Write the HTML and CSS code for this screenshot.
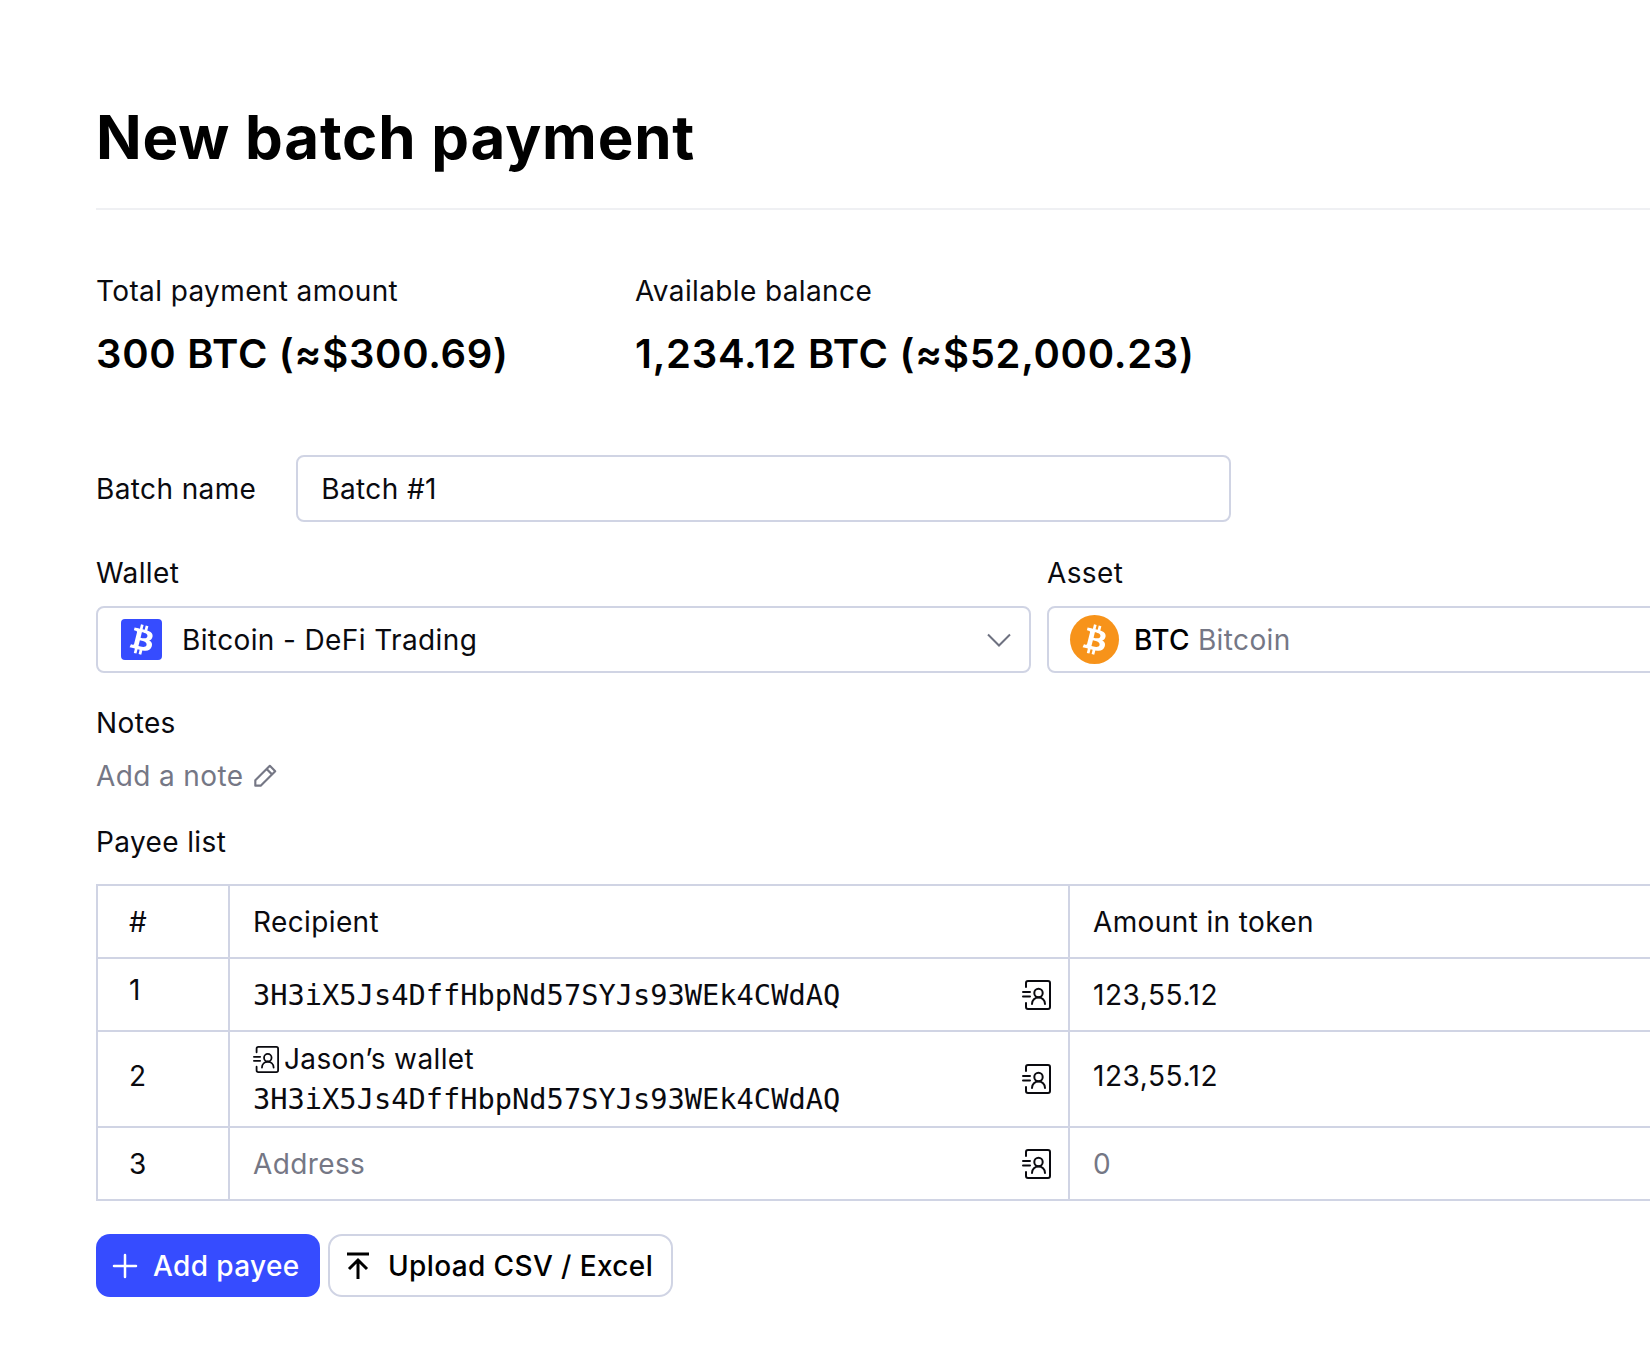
FILE: index.html
```html
<!DOCTYPE html>
<html lang="en">
	<head>
		<title>New batch payment</title>
		<meta charset="UTF-8">
		<link rel="stylesheet" href="styles.css">
	</head>
	<body>
		<svg class="iconDefs" width="0" height="0">
			<symbol id="book" viewBox="0 0 29 30">
				<path d="M4 7V3a2 2 0 0 1 2-2h20a2 2 0 0 1 2 2v24a2 2 0 0 1-2 2H6a2 2 0 0 1-2-2v-4" fill="none" stroke="currentColor" stroke-width="2" stroke-linecap="round"/>
				<path d="M1 12h7M1 16.500h7" fill="none" stroke="currentColor" stroke-width="2" stroke-linecap="round"/>
				<circle cx="16.500" cy="13" r="4.200" fill="none" stroke="currentColor" stroke-width="2"/>
				<path d="M10 24c0-4 3-6.500 6.500-6.500s6.500 2.500 6.500 6.500" fill="none" stroke="currentColor" stroke-width="2" stroke-linecap="round"/>
			</symbol>
			<symbol id="btcB" viewBox="5 3.500 14 17">
				<path fill="currentColor" fill-rule="evenodd" d="M17.288 10.291c.24-1.59-.974-2.45-2.64-3.03l.54-2.153-1.315-.33-.525 2.107c-.345-.087-.705-.167-1.064-.25l.526-2.127-1.32-.33-.54 2.165c-.285-.067-.565-.132-.84-.2l-1.815-.45-.35 1.407s.975.225.955.236c.535.136.63.486.615.766l-1.477 5.92c-.075.166-.24.406-.614.314.015.02-.96-.24-.96-.24l-.66 1.51 1.71.426.93.242-.54 2.19 1.32.327.54-2.17c.36.1.705.19 1.05.273l-.51 2.154 1.32.33.545-2.19c2.24.427 3.93.257 4.64-1.774.57-1.637-.03-2.58-1.217-3.196.854-.193 1.5-.76 1.68-1.93h.01zm-3.01 4.22c-.404 1.64-3.157.75-4.05.53l.72-2.9c.896.23 3.757.67 3.33 2.37zm.41-4.24c-.37 1.49-2.662.735-3.405.55l.654-2.64c.744.18 3.137.524 2.75 2.084v.006z"/>
			</symbol>
		</svg>

		<div class="mainBlock">
			<h1>New batch payment</h1>

			<div class="totals">
				<div class="totalBox">
					<p class="totalLabel">Total payment amount</p>
					<p class="totalValue">300 BTC (≈$300.69)</p>
				</div>
				<div class="totalBox">
					<p class="totalLabel">Available balance</p>
					<p class="totalValue">1,234.12 BTC (≈$52,000.23)</p>
				</div>
			</div>

			<div class="batchRow">
				<span class="fieldLabel">Batch name</span>
				<div class="field batchField">Batch #1</div>
			</div>

			<div class="selectRow">
				<div class="selectCol">
					<span class="fieldLabel">Wallet</span>
					<div class="field walletField">
						<span class="walletIcon"><svg width="28" height="34"><use href="#btcB"/></svg></span>
						<span class="walletName">Bitcoin - DeFi Trading</span>
						<svg class="chevron" width="26" height="16" viewBox="0 0 26 16"><path d="M2 2.500l11 11 11-11" fill="none" stroke="currentColor" stroke-width="2"/></svg>
					</div>
				</div>
				<div class="selectCol">
					<span class="fieldLabel">Asset</span>
					<div class="field assetField">
						<span class="assetIcon"><svg width="28" height="34"><use href="#btcB"/></svg></span>
						<span class="assetCode">BTC</span>
						<span class="assetName">Bitcoin</span>
					</div>
				</div>
			</div>

			<p class="fieldLabel notesLabel">Notes</p>
			<p class="addNote">Add a note
				<svg width="28" height="28" viewBox="0 0 26 26"><path d="M17.500 3.500l5 5L9 22H4v-5zM14.500 6.500l5 5" fill="none" stroke="currentColor" stroke-width="2" stroke-linejoin="round"/></svg>
			</p>

			<p class="fieldLabel payeeLabel">Payee list</p>
			<table class="payeeTable">
				<tr class="headRow">
					<th class="numCol">#</th>
					<th class="recipientCol">Recipient</th>
					<th>Amount in token</th>
				</tr>
				<tr class="payeeRow">
					<td class="numCol firstNum">1</td>
					<td class="recipientCol">
						<div class="recipientCell">
							<div class="address">3H3iX5Js4DffHbpNd57SYJs93WEk4CWdAQ</div>
							<svg class="bookIcon" width="29" height="30"><use href="#book"/></svg>
						</div>
					</td>
					<td class="amount">123,55.12</td>
				</tr>
				<tr class="payeeRow tallRow">
					<td class="numCol raised">2</td>
					<td class="recipientCol">
						<div class="recipientCell">
							<div>
								<div class="payeeName"><svg width="26" height="27"><use href="#book"/></svg>Jason’s wallet</div>
								<div class="address">3H3iX5Js4DffHbpNd57SYJs93WEk4CWdAQ</div>
							</div>
							<svg class="bookIcon" width="29" height="30"><use href="#book"/></svg>
						</div>
					</td>
					<td class="amount raised">123,55.12</td>
				</tr>
				<tr class="payeeRow">
					<td class="numCol">3</td>
					<td class="recipientCol">
						<div class="recipientCell">
							<div class="placeholder">Address</div>
							<svg class="bookIcon" width="29" height="30"><use href="#book"/></svg>
						</div>
					</td>
					<td class="placeholder">0</td>
				</tr>
			</table>

			<div class="buttons">
				<div class="button buttonAdd">
					<svg width="26" height="26" viewBox="0 0 26 26"><path d="M13 2v22M2 13h22" fill="none" stroke="currentColor" stroke-width="2.500" stroke-linecap="round"/></svg>
					Add payee
				</div>
				<div class="button buttonUpload">
					<svg width="26" height="28" viewBox="0 0 26 28"><path d="M2 2h22M13 27V8M4 17l9-9 9 9" fill="none" stroke="currentColor" stroke-width="3"/></svg>
					Upload CSV / Excel
				</div>
			</div>
		</div>
	</body>
</html>
```

FILE: styles.css
```css
html, body {
	margin : 0;
	padding : 0;
	height : 1350px;
	overflow : hidden;
	background-color : white;
}
body {
	font-family : Inter, "Liberation Sans", sans-serif;
	font-size : 28px;
	letter-spacing : 0.38px;
	color : #0a0a0f;
}
p {
	margin : 0;
	padding : 0;
}
.iconDefs {
	position : absolute;
}
.mainBlock {
	width : 1760px;
	padding : 93px 0 0 96px;
}
h1 {
	margin : 0;
	padding-bottom : 26px;
	font-size : 60px;
	line-height : 89px;
	font-weight : 700;
	letter-spacing : 0.8px;
	color : black;
	border-bottom : 2px solid #eff0f3;
}
.totals {
	display : flex;
	gap : 0;
	margin-top : 62px;
}
.totalBox {
	flex : none;
	width : 539px;
}
.totalLabel {
	line-height : 38px;
}
.totalValue {
	margin-top : 20px;
	font-size : 40px;
	line-height : 48px;
	font-weight : 600;
	letter-spacing : 0.72px;
	color : black;
	white-space : nowrap;
}
.batchRow {
	display : flex;
	align-items : center;
	gap : 40px;
	margin-top : 77px;
}
.fieldLabel {
	line-height : 38px;
	display : block;
}
.field {
	display : flex;
	align-items : center;
	box-sizing : border-box;
	height : 67px;
	border : 2px solid #d0d4e4;
	border-radius : 8px;
	background-color : white;
}
.batchField {
	width : 935px;
	padding-left : 23px;
}
.selectRow {
	display : flex;
	gap : 16px;
	margin-top : 32px;
}
.selectCol {
	flex : none;
	width : 935px;
}
.selectCol .field {
	margin-top : 14px;
}
.walletField {
	padding-left : 23px;
	padding-right : 17px;
}
.walletIcon {
	display : flex;
	align-items : center;
	justify-content : center;
	width : 41px;
	height : 41px;
	border-radius : 4px;
	background-color : #364cff;
	color : white;
}
.walletName {
	flex : 1;
	margin-left : 20px;
}
.chevron {
	color : #6e7180;
}
.assetField {
	padding-left : 21px;
}
.assetIcon {
	display : flex;
	align-items : center;
	justify-content : center;
	width : 49px;
	height : 49px;
	border-radius : 50%;
	background-color : #f7931a;
	color : white;
}
.assetCode {
	margin-left : 15px;
	font-weight : 500;
	color : black;
}
.assetName {
	margin-left : 8px;
	color : #757785;
}
.notesLabel {
	margin-top : 31px;
}
.addNote {
	display : flex;
	align-items : center;
	gap : 8px;
	margin-top : 15px;
	line-height : 38px;
	color : #757785;
}
.payeeLabel {
	margin-top : 28px;
}
.payeeTable {
	width : 1700px;
	margin-top : 23px;
	table-layout : fixed;
	border-collapse : collapse;
	border : 2px solid #d0d4e4;
}
.payeeTable th, .payeeTable td {
	padding : 0 23px;
	border : 2px solid #d0d4e4;
	font-weight : 400;
	text-align : left;
}
.headRow {
	height : 73px;
}
.payeeRow {
	height : 73px;
}
.tallRow {
	height : 96px;
}
.payeeTable .numCol {
	width : 99px;
	padding-left : 31px;
	padding-right : 0;
}
.payeeTable .recipientCol {
	width : 792px;
}
.payeeTable .firstNum {
	padding-bottom : 10px;
}
.payeeTable .raised {
	padding-bottom : 6px;
}
.amount {
	letter-spacing : 0.55px;
}
.recipientCell {
	display : flex;
	align-items : center;
	justify-content : space-between;
}
.bookIcon {
	flex : none;
	margin-right : -6px;
}
.address {
	font-family : "DejaVu Sans Mono", monospace;
	font-size : 28.700px;
	letter-spacing : 0;
	line-height : 40px;
	color : #0a0a0f;
}
.payeeName {
	display : flex;
	align-items : center;
	gap : 5px;
	line-height : 40px;
}
.placeholder {
	color : #757785;
}
.buttons {
	display : flex;
	gap : 8px;
	margin-top : 33px;
}
.button {
	display : flex;
	align-items : center;
	box-sizing : border-box;
	height : 63px;
	border-radius : 14px;
	font-weight : 500;
	cursor : pointer;
}
.buttonAdd {
	gap : 15px;
	width : 224px;
	padding-left : 16px;
	background-color : #364cff;
	color : white;
}
.buttonUpload {
	gap : 17px;
	width : 345px;
	padding-left : 15px;
	border : 2px solid #d0d4e4;
	color : black;
}
```
